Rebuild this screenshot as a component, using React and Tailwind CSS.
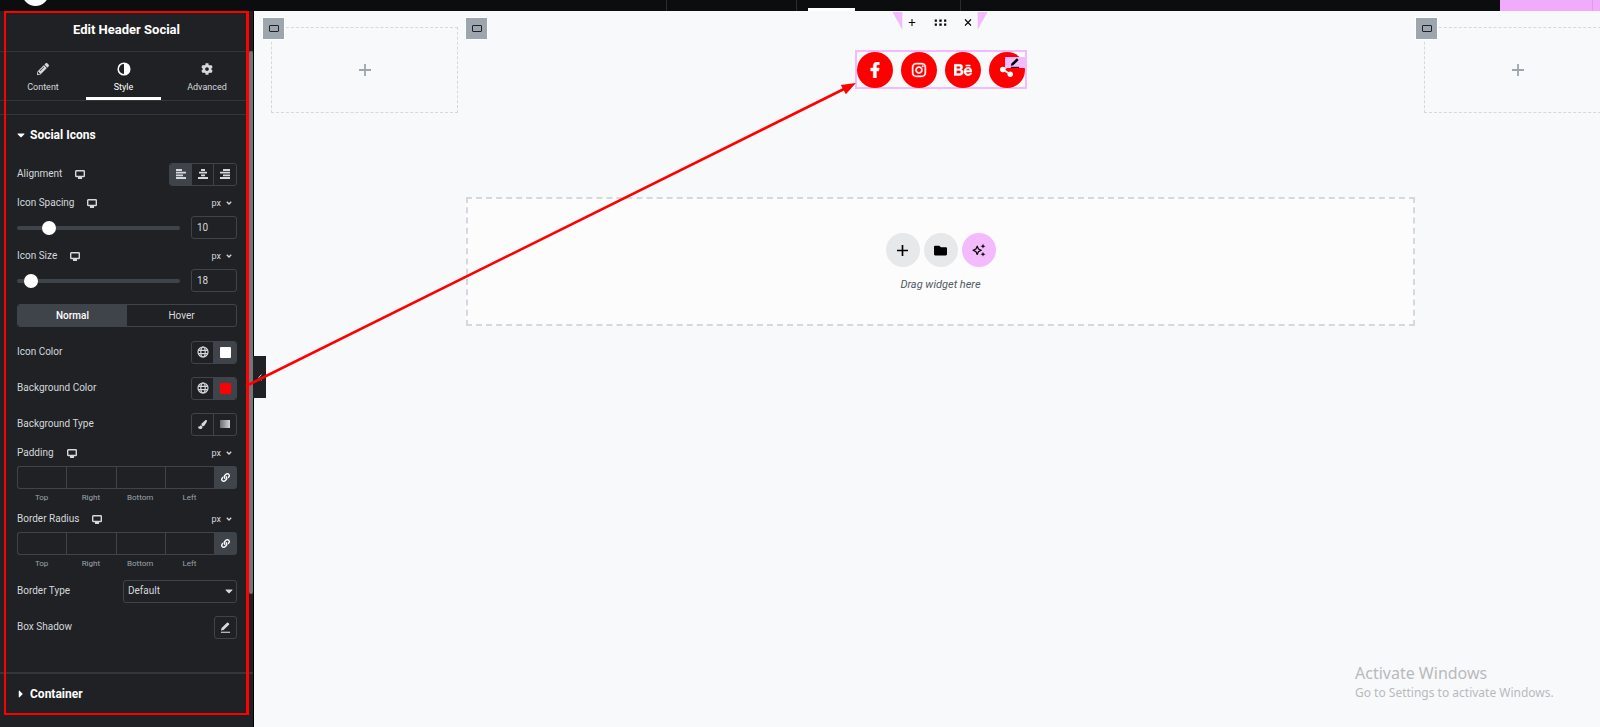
import React, { useState } from "react";
import clsx from "clsx";
import {
  FaBehance,
  FaCaretDown,
  FaCaretRight,
  FaCog,
  FaFacebookF,
  FaFolder,
  FaInstagram,
  FaLink,
  FaPaintBrush,
  FaPencilAlt,
  FaShareAlt,
} from "react-icons/fa";

function DesktopIcon() {
  return (
    <svg viewBox="0 0 10 9" className="w-[10px] h-[9px] shrink-0" fill="none" stroke="currentColor">
      <rect x="0.7" y="0.7" width="8.6" height="5.8" rx="0.6" strokeWidth="1.4" />
      <path d="M3 8h4M5 6.5V8" strokeWidth="1.8" />
    </svg>
  );
}

function GlobeIcon() {
  return (
    <svg viewBox="0 0 12 12" className="w-3 h-3" fill="none" stroke="currentColor" strokeWidth="1.2">
      <circle cx="6" cy="6" r="5" />
      <ellipse cx="6" cy="6" rx="2.2" ry="5" />
      <path d="M1.300 4.300h9.400M1.300 7.700h9.400" />
    </svg>
  );
}

function AlignIcon({ side }) {
  const paths = {
    left: "M0 1h6M0 3.7h10M0 6.4h7M0 9h10",
    center: "M3 1h4M1 3.7h8M3 6.4h4M0 9h10",
    right: "M3 1h7M0 3.7h10M3 6.4h7M0 9h10",
  };
  return (
    <svg viewBox="0 0 10 10" className="w-[10px] h-[10px]" stroke="currentColor" strokeWidth="1.8">
      <path d={paths[side]} />
    </svg>
  );
}

function PenIcon({ className }) {
  return (
    <svg viewBox="0 0 12 12" className={className}>
      <path d="M1 9.2 1.7 6.6 7.6.9a1 1 0 0 1 1.4 0l.8.8a1 1 0 0 1 0 1.4L3.9 8.7Z" fill="currentColor" />
      <path d="M1 11.2h10" stroke="currentColor" strokeWidth="1.2" />
    </svg>
  );
}

function Sparkles() {
  return (
    <svg viewBox="0 0 14 14" className="w-[14px] h-[14px]">
      <path
        d="M5.2 3.2 6.5 6 9.3 7.3 6.5 8.6 5.2 11.4 3.9 8.6 1.1 7.3 3.9 6Z"
        fill="none"
        stroke="currentColor"
        strokeWidth="1.2"
        strokeLinejoin="round"
      />
      <path d="M11 .8l.7 1.7 1.7.7-1.7.7-.7 1.7-.7-1.7-1.7-.7 1.7-.7ZM11 9l.7 1.6 1.7.7-1.7.7-.7 1.6-.7-1.6-1.7-.7 1.7-.7Z" fill="currentColor" />
    </svg>
  );
}

function PlusIcon({ className }) {
  return (
    <svg viewBox="0 0 12 12" className={className} stroke="currentColor">
      <path d="M6 0v12M0 6h12" strokeWidth="1.8" />
    </svg>
  );
}

function UnitLabel({ label, htmlFor }) {
  return (
    <div className="flex h-[18px] items-center">
      <label htmlFor={htmlFor} className="mr-[13px]">{label}</label>
      <DesktopIcon />
      <button type="button" className="ml-auto mr-[5px] flex items-center gap-[5px] text-[9px]">
        px
        <svg viewBox="0 0 6 4" className="w-[6px] h-[4px]" fill="none" stroke="currentColor" strokeWidth="1.3">
          <path d="M.8.8 3 3 5.2.8" />
        </svg>
      </button>
    </div>
  );
}

function SliderControl({ id, label, min, max, initial }) {
  const [value, setValue] = useState(initial);
  return (
    <div>
      <UnitLabel label={label} htmlFor={id} />
      <div className="mt-1 flex h-[23px] items-center justify-between">
        <input
          id={id}
          type="range"
          min={min}
          max={max}
          value={value}
          onChange={(e) => setValue(e.target.value)}
          className="h-[14px] w-[163px] appearance-none bg-transparent [&::-webkit-slider-runnable-track]:h-1 [&::-webkit-slider-runnable-track]:rounded-full [&::-webkit-slider-runnable-track]:bg-[#3f444b] [&::-webkit-slider-thumb]:-mt-[5px] [&::-webkit-slider-thumb]:h-[14px] [&::-webkit-slider-thumb]:w-[14px] [&::-webkit-slider-thumb]:appearance-none [&::-webkit-slider-thumb]:rounded-full [&::-webkit-slider-thumb]:bg-white"
        />
        <input
          type="text"
          aria-label={label + " value"}
          value={value}
          onChange={(e) => setValue(e.target.value)}
          className="h-[23px] w-[46px] rounded-[3px] border border-[#3f444b] bg-transparent px-[5px]"
        />
      </div>
    </div>
  );
}

function DimensionsControl({ id, label }) {
  return (
    <div>
      <UnitLabel label={label} htmlFor={id + "-Top"} />
      <div className="mt-1 flex">
        {["Top", "Right", "Bottom", "Left"].map((side, i) => (
          <div key={side} className="flex flex-1 flex-col items-center">
            <input
              id={id + "-" + side}
              type="text"
              className={clsx(
                "h-[23px] w-full border-y border-l border-[#3f444b] bg-transparent px-1",
                i === 0 && "rounded-l-[3px]"
              )}
            />
            <label htmlFor={id + "-" + side} className="mt-[3px] text-[8px] leading-[12px] text-[#9da5ae]">
              {side}
            </label>
          </div>
        ))}
        <button type="button" aria-label="Link values" className="flex h-[23px] w-[23px] items-center justify-center rounded-r-[3px] bg-[#3f444b] text-white">
          <FaLink size={9} />
        </button>
      </div>
    </div>
  );
}

function ChoiceRow({ label, icon, children }) {
  return (
    <div className="flex h-6 items-center">
      <span className="mr-[13px]">{label}</span>
      {icon}
      <div className="ml-auto flex h-[23px] divide-x divide-[#3f444b] overflow-hidden rounded-[3px] border border-[#3f444b]">
        {children}
      </div>
    </div>
  );
}

function Choice({ active, label, children }) {
  return (
    <button
      type="button"
      aria-label={label}
      className={clsx("flex w-[22px] items-center justify-center", active && "bg-[#3f444b]")}
    >
      {children}
    </button>
  );
}

function Panel() {
  const tabs = [
    { name: "Content", icon: <FaPencilAlt size={12} /> },
    {
      name: "Style",
      icon: (
        <svg viewBox="0 0 14 14" className="w-[14px] h-[14px]">
          <circle cx="7" cy="7" r="5.8" fill="none" stroke="currentColor" strokeWidth="1.5" />
          <path d="M7 1.2a5.8 5.8 0 0 1 0 11.6Z" fill="currentColor" />
        </svg>
      ),
    },
    { name: "Advanced", icon: <FaCog size={12} /> },
  ];

  return (
    <aside className="relative z-10 w-[254px] shrink-0 border-r border-black bg-[#1f2124] text-[10px] leading-[16px] text-[#d5d8dc]">
      <h1 className="flex h-[41px] items-center justify-center border-b border-[#33363a] pb-[2px] text-[13px] font-bold text-white">
        Edit Header Social
      </h1>
      <div className="grid h-[49px] grid-cols-[76px_75px_1fr] gap-[5px] border-b border-[#33363a] px-[5px]">
        {tabs.map((tab) => (
          <button
            key={tab.name}
            type="button"
            className={clsx(
              "flex flex-col items-center border-b-[3px] pt-[10px] text-[9px] leading-[12px]",
              tab.name === "Style" ? "border-white text-white" : "border-transparent"
            )}
          >
            <span className="mb-[5px] flex h-[14px] items-center">{tab.icon}</span>
            {tab.name}
          </button>
        ))}
      </div>

      <section className="mt-[13px] border-t border-[#33363a] pl-[17px] pr-4">
        <h2 className="flex h-10 items-center gap-[5px] text-[12px] font-bold text-white">
          <FaCaretDown className="h-3 w-2" />
          Social Icons
        </h2>
        <div className="flex flex-col pt-[7px]">
          <ChoiceRow label="Alignment" icon={<DesktopIcon />}>
            <Choice active label="Left"><AlignIcon side="left" /></Choice>
            <Choice label="Center"><AlignIcon side="center" /></Choice>
            <Choice label="Right"><AlignIcon side="right" /></Choice>
          </ChoiceRow>
          <div className="mt-2 flex flex-col gap-2">
            <SliderControl id="spacing" label="Icon Spacing" min={0} max={60} initial={10} />
            <SliderControl id="size" label="Icon Size" min={6} max={250} initial={18} />
          </div>
        </div>
        <div className="mt-3 flex h-[23px] overflow-hidden rounded-[3px] border border-[#3f444b]">
          <button type="button" className="flex-1 bg-[#3f444b] font-medium text-white">Normal</button>
          <button type="button" className="flex-1">Hover</button>
        </div>
        <div className="flex flex-col gap-3 pt-[13px]">
          <ChoiceRow label="Icon Color">
            <Choice label="Global colors"><GlobeIcon /></Choice>
            <Choice active label="Pick icon color"><span className="h-[11px] w-[11px] rounded-[1px] bg-white" /></Choice>
          </ChoiceRow>
          <ChoiceRow label="Background Color">
            <Choice label="Global colors"><GlobeIcon /></Choice>
            <Choice active label="Pick background color"><span className="h-[11px] w-[11px] rounded-[1px] bg-[#ff0000]" /></Choice>
          </ChoiceRow>
          <ChoiceRow label="Background Type">
            <Choice label="Classic"><FaPaintBrush size={9} /></Choice>
            <Choice label="Gradient"><span className="h-2 w-[10px] bg-gradient-to-r from-[#6b6f74] to-[#d5d8dc]" /></Choice>
          </ChoiceRow>
        </div>
        <div className="flex flex-col gap-[6px] pt-2">
          <DimensionsControl id="padding" label="Padding" />
          <DimensionsControl id="radius" label="Border Radius" />
        </div>
        <div className="flex flex-col gap-3 pb-[33px] pt-[9px]">
          <div className="flex h-6 items-center justify-between">
            <label htmlFor="border-type">Border Type</label>
            <div className="relative h-[23px]">
              <select id="border-type" className="h-[23px] w-[114px] appearance-none rounded-[3px] border border-[#3f444b] bg-[#1f2124] px-1">
                <option>Default</option>
                <option>None</option>
                <option>Solid</option>
              </select>
              <FaCaretDown className="pointer-events-none absolute right-1 top-[5px] h-3 w-2" />
            </div>
          </div>
          <div className="flex h-6 items-center justify-between">
            <span>Box Shadow</span>
            <button type="button" aria-label="Edit box shadow" className="flex h-[23px] w-[23px] items-center justify-center rounded-[3px] border border-[#3f444b]">
              <PenIcon className="h-[11px] w-[11px]" />
            </button>
          </div>
        </div>
      </section>

      <section className="border-t-2 border-[#33363a] px-[17px]">
        <h2 className="flex h-10 items-center gap-[5px] text-[12px] font-bold text-white">
          <FaCaretRight className="h-3 w-2" />
          Container
        </h2>
      </section>

      {/* scrollbar, highlight frame and collapse handle sit over the panel */}
      <div className="absolute right-0 top-10 h-[543px] w-1 rounded-full bg-[#71767a]" />
      <div className="pointer-events-none absolute left-1 right-1 top-0 h-[704px] border-2 border-r-[3px] border-[#ff0000]" />
      <button type="button" aria-label="Collapse panel" className="absolute left-full top-[345px] flex h-[42px] w-[13px] items-center justify-center bg-[#1f2124]">
        <svg viewBox="0 0 4 7" className="h-[7px] w-1" fill="none" stroke="currentColor">
          <path d="M3.4.6.8 3.5l2.6 2.9" />
        </svg>
      </button>
    </aside>
  );
}

function ColumnHandle({ className }) {
  return (
    <button
      type="button"
      aria-label="Edit column"
      className={clsx(
        "absolute -top-[9px] flex h-[21px] w-[21px] items-center justify-center bg-[#9da5ae] text-[#1f2124] outline outline-white",
        className
      )}
    >
      <span className="h-[7px] w-[10px] rounded-[1px] border border-current" />
    </button>
  );
}

function EmptyColumn() {
  return (
    <div className="relative w-[187px]">
      <div className="flex h-[86px] items-center justify-center border border-dashed border-[#d5d8dc] text-[#9da5ae]">
        <PlusIcon className="h-3 w-3" />
      </div>
      <ColumnHandle className="-left-2" />
    </div>
  );
}

function SectionToolbar() {
  return (
    <div className="absolute left-1/2 top-px flex h-[18px] -translate-x-1/2 text-black">
      <svg viewBox="0 0 10 18" className="h-[18px] w-[10px]"><path d="M0 0h10v18Z" fill="#f3bafd" /></svg>
      <div className="flex w-[75px] items-center justify-between px-[6px] pt-[2px]">
        <button type="button" aria-label="Add section"><PlusIcon className="h-[7px] w-[7px]" /></button>
        <button type="button" aria-label="Edit section">
          <svg viewBox="0 0 12 7" className="h-[7px] w-3" fill="currentColor">
            <path d="M0 .5h2.4v2.2H0zM4.8.5h2.4v2.2H4.8zM9.6.5H12v2.2H9.6zM0 4.5h2.4v2.2H0zM4.8 4.5h2.4v2.2H4.8zM9.6 4.5H12v2.2H9.6z" />
          </svg>
        </button>
        <button type="button" aria-label="Delete section">
          <svg viewBox="0 0 7 7" className="h-[7px] w-[7px]" stroke="currentColor" strokeWidth="1.3">
            <path d="M.4.4l6.2 6.2M6.6.4.4 6.6" />
          </svg>
        </button>
      </div>
      <svg viewBox="0 0 10 18" className="h-[18px] w-[10px]"><path d="M0 0h10L0 18Z" fill="#f3bafd" /></svg>
    </div>
  );
}

function SocialWidget() {
  const icons = [
    { name: "Facebook", icon: <FaFacebookF size={16} strokeWidth={14} /> },
    { name: "Instagram", icon: <FaInstagram size={16} strokeWidth={14} /> },
    { name: "Behance", icon: <FaBehance size={18} strokeWidth={14} /> },
    { name: "Share", icon: <FaShareAlt size={15} /> },
  ];
  return (
    <div className="relative mt-[23px] flex h-[39px] items-center gap-2 border-2 border-[#f3bafd]">
      {icons.map(({ name, icon }) => (
        <a key={name} href="#" aria-label={name} className="flex h-[36px] w-[36px] items-center justify-center rounded-full bg-[#ff0000] text-white">
          {icon}
        </a>
      ))}
      <button type="button" aria-label="Edit widget" className="absolute -right-px top-[5px] flex h-[11px] w-[21px] items-center justify-center bg-[#f3bafd] text-black">
        <PenIcon className="h-[10px] w-[10px]" />
      </button>
    </div>
  );
}

function DropZone() {
  return (
    <div className="ml-[212px] mr-[185px] mt-[84px] flex h-[129px] flex-col items-center border-2 border-dashed border-[#d5d8dc] bg-[#fcfcfd] pt-[34px]">
      <div className="flex gap-1">
        <button type="button" aria-label="Add new section" className="flex h-[34px] w-[34px] items-center justify-center rounded-full bg-[#e6e8ea] text-black">
          <PlusIcon className="h-[11px] w-[11px]" />
        </button>
        <button type="button" aria-label="Add template" className="flex h-[34px] w-[34px] items-center justify-center rounded-full bg-[#e6e8ea] text-black">
          <FaFolder size={13} />
        </button>
        <button type="button" aria-label="Build with AI" className="flex h-[34px] w-[34px] items-center justify-center rounded-full bg-[#f3bafd] text-black">
          <Sparkles />
        </button>
      </div>
      <p className="mt-[10px] text-[11px] italic leading-[16px] text-[#515962]">Drag widget here</p>
    </div>
  );
}

function Canvas() {
  return (
    <main className="relative min-w-0 flex-1 overflow-hidden bg-[#f8f9fb]">
      <div className="flex h-[102px] items-start pt-4">
        <div className="ml-[17px]">
          <EmptyColumn />
        </div>
        <div className="relative ml-2 flex h-[86px] flex-1 justify-center">
          <ColumnHandle className="left-0" />
          <SocialWidget />
        </div>
        <div className="ml-[9px] w-[176px]">
          <EmptyColumn />
        </div>
      </div>
      <DropZone />
      <div className="absolute left-[212px] right-[186px] top-0">
        <SectionToolbar />
      </div>
      <div className="absolute bottom-[26px] right-[45px] w-[200px] whitespace-nowrap font-['Noto_Sans'] text-[#b9babc]">
        <p className="text-[16px] leading-[21px]">Activate Windows</p>
        <p className="text-[12px] leading-[17px]">Go to Settings to activate Windows.</p>
      </div>
    </main>
  );
}

function TopBar() {
  return (
    <header className="relative flex h-[11px] shrink-0 overflow-hidden bg-[#0c0d0e]">
      <div className="absolute -top-[21px] left-[22px] h-[27px] w-[27px] rounded-full bg-white" />
      <div className="ml-[666px] w-[131px] border-x border-[#2a2c2f]" />
      <div className="ml-[11px] mt-2 w-[47px] bg-white" />
      <div className="ml-[105px] w-px bg-[#2a2c2f]" />
      <div className="ml-auto w-[100px] bg-[#f0abfc] pr-[7px]">
        <div className="h-full border-r border-[#e29aef]" />
      </div>
    </header>
  );
}

export default function App() {
  return (
    <div className="relative flex h-screen min-w-[1200px] flex-col overflow-hidden bg-[#1f2124] font-[Roboto,sans-serif]">
      <TopBar />
      <div className="flex flex-1">
        <Panel />
        <Canvas />
      </div>
      {/* callout arrow from the background colour control to the icons */}
      <svg viewBox="0 0 620 320" className="pointer-events-none absolute left-[240px] top-[77px] z-20 h-[320px] w-[620px]">
        <path d="M6 309 606 11" stroke="#ff0000" strokeWidth="2.6" />
        <path d="M614 7 606 16 602 8.5Z" fill="#ff0000" stroke="#ff0000" strokeWidth="1.5" />
      </svg>
    </div>
  );
}
